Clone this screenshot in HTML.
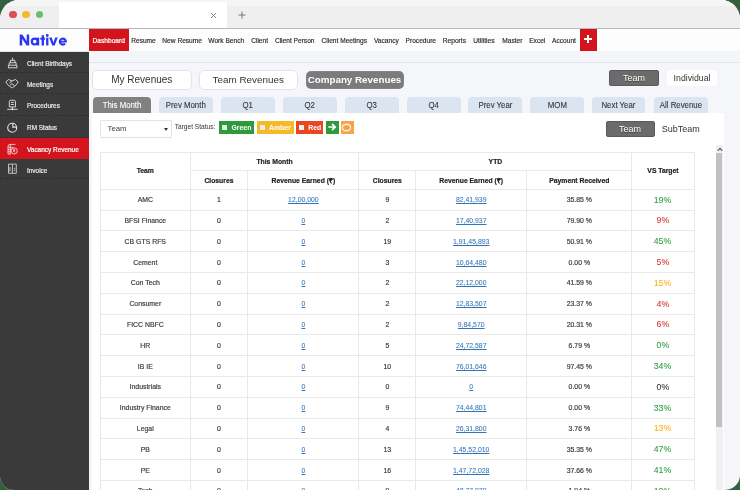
<!DOCTYPE html>
<html><head><meta charset="utf-8"><title>Native</title>
<style>
*{box-sizing:border-box;margin:0;padding:0}
html,body{width:740px;height:490px;overflow:hidden;background:#35603d;font-family:"Liberation Sans",sans-serif;}
#win{position:absolute;left:0;top:0;width:740px;height:490px;border-radius:19px 19px 15px 14px;overflow:hidden;background:#f5f6f9;will-change:transform;}
.abs{position:absolute}
#titlebar{position:absolute;left:0;top:0;width:740px;height:28px;background:#efefef;}
#titlebar .hi{position:absolute;left:0;top:0;width:740px;height:5.700px;background:#f5f5f5}
.dot{position:absolute;top:10.800px;width:7.600px;height:7.600px;border-radius:50%}
#tab{position:absolute;left:59px;top:1.800px;width:168px;height:26.200px;background:#fff}
#tbline{position:absolute;left:0;top:27.700px;width:740px;height:1.800px;background:#b6b9c1}
#hdr{position:absolute;left:0;top:29px;width:740px;height:22.500px;background:#fdfdfe;border-bottom:1px solid #e4e7f0}
#logo{position:absolute;left:19.600px;top:29px;height:22px;line-height:22px;font-weight:bold;font-size:15px;color:#2a38f4;letter-spacing:0.45px}
.nav{position:absolute;top:29px;height:22px;line-height:23px;font-size:6.6px;color:#2c2c2c;-webkit-text-stroke:0.150px currentColor;white-space:nowrap;text-align:center}
#dash{position:absolute;left:89px;top:29px;width:39.500px;height:22.500px;background:#d4141c;color:#fff;font-size:6.6px;line-height:23px;text-align:center;-webkit-text-stroke:0.200px currentColor}
#plus{position:absolute;left:579.600px;top:29px;width:17.500px;height:22px;background:#d4141c}
#plus:before{content:"";position:absolute;left:4.500px;top:9.200px;width:8.200px;height:2px;background:#fff}
#plus:after{content:"";position:absolute;left:7.600px;top:6.100px;width:2px;height:8.200px;background:#fff}
#sub{position:absolute;left:89px;top:51px;width:651px;height:11.700px;background:#f4f5f9;border-bottom:1px solid #e3e5ec}
#side{position:absolute;left:0;top:51.800px;width:88.900px;height:440px;background:#3a3a3a}
.si{position:absolute;left:0;width:88.900px;border-bottom:1px dashed #2e2e2e;color:#e8e8e8;-webkit-text-stroke:0.200px currentColor;font-size:6.450px;padding-left:27px;white-space:nowrap}
.si svg{position:absolute;left:5px;top:5px}
.si.on{background:#d4141c;color:#fff;border-bottom-color:#d4141c}
.btn{position:absolute;text-align:center;white-space:nowrap;border-radius:4px}
.tab{position:absolute;top:97px;height:16px;background:#dbe5f1;border-radius:4px 4px 0 0;font-size:8.500px;line-height:17.400px;color:#333;text-align:center;white-space:nowrap}.cx{display:inline-block;transform:scaleX(0.92)}.tab span{display:inline-block;transform:scaleX(0.92);-webkit-text-stroke:0.100px currentColor}
#panel{position:absolute;left:92px;top:113px;width:632px;height:380px;background:#fff}
table{position:absolute;left:100px;top:152px;border-collapse:collapse;table-layout:fixed;width:593.600px;font-size:6.900px;color:#3c3c3c;-webkit-text-stroke:0.180px currentColor}
td,th{border:1px solid #e8eaea;text-align:center;vertical-align:middle;padding:0;height:20.800px}
th{font-weight:bold;color:#222;height:18.400px;font-size:6.800px}
td a{-webkit-text-stroke:0.050px currentColor;color:#3375ba;text-decoration:underline;text-decoration-thickness:0.700px;text-underline-offset:0.500px}
td.v{font-size:9.500px;-webkit-text-stroke:0.080px currentColor}td.v span{position:relative;top:-0.500px}
.g{color:#2f9e3f}.r{color:#d7353a}.a{color:#f7b21e}.k{color:#333}
</style></head><body><div id="win">
<div id="titlebar"><div class="hi"></div>
<div class="dot" style="left:9.200px;background:#dc4f55"></div><div class="dot" style="left:22.200px;background:#f6b92c"></div><div class="dot" style="left:35.600px;background:#6bbf6b"></div>
<div id="tab"></div>
<svg class="abs" style="left:209.700px;top:11.600px" width="7" height="7" viewBox="0 0 7 7"><path d="M1 1l5 5M6 1l-5 5" stroke="#888" stroke-width="1"/></svg>
<svg class="abs" style="left:237.600px;top:10.600px" width="8" height="8" viewBox="0 0 8 8"><path d="M4 0.500v7M0.500 4h7" stroke="#777" stroke-width="1"/></svg>
</div>
<div id="tbline"></div>
<div id="hdr"></div>
<svg class="abs" style="left:0;top:29px" width="89" height="22" viewBox="0 29 89 22"><g fill="#2a38f4" stroke="none">
<path d="M19.700 45.500V34.500H22.300L26.700 41.200V34.500H29.200V45.500H26.600L22.200 38.800V45.500Z"/>
<rect x="36.900" y="37.600" width="2.300" height="7.900"/>
<rect x="41.600" y="35.300" width="2.400" height="10.200"/><rect x="40.300" y="37.700" width="4.700" height="2"/>
<rect x="46.100" y="37.600" width="2.300" height="7.900"/><circle cx="47.250" cy="35.500" r="1.400"/>
<path d="M49.100 37.600H51.700L53.450 42.700L55.200 37.600H57.800L54.650 45.500H52.250Z"/>
</g><g fill="none" stroke="#2a38f4">
<circle cx="34.700" cy="41.600" r="2.900" stroke-width="2.200"/>
<path d="M65.050 43.500A2.950 2.950 0 1 1 65.750 41.600" stroke-width="2.200"/>
<path d="M60.500 41.700H66.850" stroke-width="1.700"/>
</g></svg>
<div id="dash">Dashboard</div>

<div class="nav" style="left:126.7px;width:33.6px"><span>Resume</span></div>
<div class="nav" style="left:158.0px;width:48.3px"><span>New Resume</span></div>
<div class="nav" style="left:203.7px;width:45.1px"><span>Work Bench</span></div>
<div class="nav" style="left:246.2px;width:26.8px"><span>Client</span></div>
<div class="nav" style="left:270.4px;width:48.6px"><span>Client Person</span></div>
<div class="nav" style="left:316.5px;width:55.5px"><span>Client Meetings</span></div>
<div class="nav" style="left:369.0px;width:34.7px"><span>Vacancy</span></div>
<div class="nav" style="left:401.0px;width:39.6px"><span>Procedure</span></div>
<div class="nav" style="left:438.0px;width:32.8px"><span>Reports</span></div>
<div class="nav" style="left:467.8px;width:32.2px"><span>Utilities</span></div>
<div class="nav" style="left:497.3px;width:30.1px"><span>Master</span></div>
<div class="nav" style="left:525.0px;width:24.5px"><span>Excel</span></div>
<div class="nav" style="left:547.2px;width:33.6px"><span>Account</span></div>
<div id="plus"></div><div id="sub"></div>
<div id="side">
<div class="si" style="top:0.0px;height:21.6px;line-height:24.0px"><svg style="top:5.1px" viewBox="0 0 14 12" width="14" height="12" fill="none" stroke="#e4e4e4" stroke-width="0.9"><path d="M7.650 0.600V3.200M5.400 5.700V3.300h4.500v2.400M4.200 8.200V5.700h6.900v2.500M3.400 10.700V8.200h8.500v2.500M3 10.800h9.300"/></svg>Client Birthdays</div>
<div class="si" style="top:21.6px;height:21.1px;line-height:23.5px"><svg style="top:4.9px" viewBox="0 0 14 12" width="14" height="12" fill="none" stroke="#e4e4e4" stroke-width="0.9" stroke-linejoin="round"><path d="M0.800 3.800L3.600 1.500L7 3L10.400 1.500L13.200 3.800L11.300 6.800L7.600 9.700L6.200 9.500L2.600 6.600ZM4.300 5L7 3M5 7.300L7 5.600L9.600 7.800"/></svg>Meetings</div>
<div class="si" style="top:42.7px;height:21.2px;line-height:23.6px"><svg style="top:4.9px" viewBox="0 0 14 12" width="14" height="12" fill="none" stroke="#e4e4e4" stroke-width="0.9"><path d="M4.300 7.900V2.500Q4.300 1.300 5.500 1.300H9.300Q10.500 1.300 10.500 2.500V7.900ZM5.900 3.500h3M5.900 5.500h3M2.200 10.300H12.600M7.400 7.900V10.300"/><circle cx="7.400" cy="10.300" r="0.900" fill="#e4e4e4" stroke="none"/></svg>Procedures</div>
<div class="si" style="top:63.9px;height:22.3px;line-height:24.7px"><svg style="top:5.5px" viewBox="0 0 14 12" width="14" height="12" fill="none" stroke="#e4e4e4" stroke-width="1.100"><circle cx="7.200" cy="6.700" r="4.500"/><path d="M7.800 2.200V6.100H11.700"/></svg>RM Status</div>
<div class="si on" style="top:86.2px;height:20.8px;line-height:23.2px"><svg style="top:4.7px" viewBox="0 0 14 12" width="14" height="12" fill="none" stroke="#f7cfcf" stroke-width="0.900"><path d="M3 11V3.300Q3 1.400 5 1.400H10.500M3 4.300h5M3 6.500h3M3 8.700h2.500M5.300 1.400V11M3 11H6"/><circle cx="9.200" cy="7.900" r="3.100"/><path d="M8.200 6.800h2M8.200 7.900h2M8.400 6.800q1.800 0.300 0 1.100l1.300 1.500"/></svg>Vacancy Revenue</div>
<div class="si" style="top:107.0px;height:20.6px;line-height:23.0px"><svg style="top:4.6px" viewBox="0 0 14 12" width="14" height="12" fill="none" stroke="#d0d0d0" stroke-width="0.900"><path d="M3.500 1.100H11.300V10.300H3.500ZM7.400 1.100V10.300M8.800 5.300h1.500M8.800 7.300h1.500M5 8.500V4"/></svg>Invoice</div>
</div>
<div class="btn" style="left:92px;top:70px;width:99.500px;height:20px;background:#fff;border:1px solid #e4e4e6;font-size:10px;line-height:18px;color:#333;border-radius:5px">My Revenues</div>
<div class="btn" style="left:198.500px;top:70px;width:99.500px;height:20px;background:#fff;border:1px solid #e4e4e6;font-size:9.900px;line-height:18px;color:#333;border-radius:5px">Team Revenues</div>
<div class="btn" style="left:305.500px;top:70.500px;width:98px;height:18.500px;background:#7b7b7b;border:1px dotted #8d8d8d;font-size:9.800px;line-height:16.500px;color:#fff;font-weight:bold;border-radius:5px">Company Revenues</div>
<div class="btn" style="left:608.500px;top:70px;width:50px;height:16px;background:#6b6b6b;border:1px solid #5a5a5a;font-size:9.800px;line-height:14.200px;color:#fff;border-radius:2px"><span class="cx" style="text-shadow:0 0.500px 0.500px rgba(0,0,0,.45)">Team</span></div>
<div class="btn" style="left:667px;top:70px;width:49.500px;height:16px;background:#fff;font-size:9.500px;line-height:15.800px;color:#333;border-radius:2px"><span class="cx">Individual</span></div>
<div class="tab" style="left:92.500px;width:58.500px;background:#818181;color:#fff;"><span>This Month</span></div>
<div class="tab" style="left:158.8px;width:54.6px"><span>Prev Month</span></div>
<div class="tab" style="left:221.0px;width:54.0px"><span>Q1</span></div>
<div class="tab" style="left:282.7px;width:54.1px"><span>Q2</span></div>
<div class="tab" style="left:344.9px;width:54.1px"><span>Q3</span></div>
<div class="tab" style="left:406.5px;width:54.0px"><span>Q4</span></div>
<div class="tab" style="left:468.3px;width:54.1px"><span>Prev Year</span></div>
<div class="tab" style="left:530.4px;width:53.6px"><span>MOM</span></div>
<div class="tab" style="left:592.0px;width:53.4px"><span>Next Year</span></div>
<div class="tab" style="left:654.0px;width:53.8px"><span>All Revenue</span></div>
<div id="panel"></div>
<div class="abs" style="left:100px;top:120.300px;width:71.600px;height:18px;border:1px solid #e3e3e3;border-radius:1px;background:#fff;font-size:7.800px;line-height:15.800px;color:#444;padding-left:6.500px">Team<span class="abs" style="right:2.200px;top:6.800px;width:0;height:0;border-left:2.100px solid transparent;border-right:2.100px solid transparent;border-top:3px solid #333"></span></div>
<div class="abs" style="left:174.700px;top:122.300px;font-size:6.600px;line-height:10px;color:#333;white-space:nowrap">Target Status:</div>
<div class="abs" style="left:218.500px;top:120.900px;width:35.500px;height:12.900px;background:#2d9a3c;color:#fff;font-weight:bold;font-size:6.900px;line-height:13.100px;padding-left:13px"><span class="abs" style="left:3.700px;top:4.100px;width:5px;height:5px;background:#e6efe6"></span>Green</div>
<div class="abs" style="left:256.500px;top:120.900px;width:37.500px;height:12.900px;background:#f6b928;color:#fff;font-weight:bold;font-size:6.900px;line-height:13.100px;padding-left:12.500px"><span class="abs" style="left:3.700px;top:4.100px;width:5px;height:5px;background:#eee"></span>Amber</div>
<div class="abs" style="left:295.700px;top:120.900px;width:27.800px;height:12.900px;background:#e8481f;color:#fff;font-weight:bold;font-size:6.900px;line-height:13.100px;padding-left:12.500px"><span class="abs" style="left:3.700px;top:4.100px;width:5px;height:5px;background:#eee"></span>Red</div>
<div class="abs" style="left:325.800px;top:120.900px;width:12.900px;height:12.900px;background:#2d9a3c"><svg class="abs" style="left:2.200px;top:2.500px" width="9" height="8" viewBox="0 0 9 8"><path d="M0.300 4h6.500M4 0.800l3.200 3.200-3.200 3.200" fill="none" stroke="#fff" stroke-width="1.700"/></svg></div>
<div class="abs" style="left:340.600px;top:120.900px;width:13.300px;height:12.900px;background:#f5a44a"><svg class="abs" style="left:1.900px;top:2.100px" width="9" height="9" viewBox="0 0 9 9"><ellipse cx="4.500" cy="4.500" rx="4.200" ry="3.300" fill="none" stroke="#fff3e0" stroke-width="1.400"/></svg></div>
<div class="btn" style="left:605.500px;top:121px;width:49px;height:16.200px;background:#6b6b6b;border:1px solid #5a5a5a;font-size:9.800px;line-height:14.200px;color:#fff;border-radius:2px"><span class="cx" style="text-shadow:0 0.500px 0.500px rgba(0,0,0,.45)">Team</span></div>
<div class="abs" style="left:660px;top:121px;font-size:9.800px;line-height:16px;color:#333"><span class="cx">SubTeam</span></div>
<table><colgroup><col style="width:89.600px"><col style="width:57.700px"><col style="width:111.200px"><col style="width:56.700px"><col style="width:111.100px"><col style="width:105.100px"><col style="width:62.200px"></colgroup>
<tr><th rowspan="2">Team</th><th colspan="2">This Month</th><th colspan="3">YTD</th><th rowspan="2">VS Target</th></tr>
<tr><th>Closures</th><th>Revenue Earned (₹)</th><th>Closures</th><th>Revenue Earned (₹)</th><th>Payment Received</th></tr>
<tr><td>AMC</td><td>1</td><td><a>12,00,000</a></td><td>9</td><td><a>82,41,939</a></td><td>35.85 %</td><td class="v g"><span class="cx">19%</span></td></tr>
<tr><td>BFSI Finance</td><td>0</td><td><a>0</a></td><td>2</td><td><a>17,40,937</a></td><td>79.90 %</td><td class="v r"><span class="cx">9%</span></td></tr>
<tr><td>CB GTS RFS</td><td>0</td><td><a>0</a></td><td>19</td><td><a>1,91,45,893</a></td><td>50.91 %</td><td class="v g"><span class="cx">45%</span></td></tr>
<tr><td>Cement</td><td>0</td><td><a>0</a></td><td>3</td><td><a>10,64,480</a></td><td>0.00 %</td><td class="v r"><span class="cx">5%</span></td></tr>
<tr><td>Con Tech</td><td>0</td><td><a>0</a></td><td>2</td><td><a>22,12,000</a></td><td>41.59 %</td><td class="v a"><span class="cx">15%</span></td></tr>
<tr><td>Consumer</td><td>0</td><td><a>0</a></td><td>2</td><td><a>12,83,507</a></td><td>23.37 %</td><td class="v r"><span class="cx">4%</span></td></tr>
<tr><td>FICC NBFC</td><td>0</td><td><a>0</a></td><td>2</td><td><a>9,84,570</a></td><td>20.31 %</td><td class="v r"><span class="cx">6%</span></td></tr>
<tr><td>HR</td><td>0</td><td><a>0</a></td><td>5</td><td><a>24,72,587</a></td><td>6.79 %</td><td class="v g"><span class="cx">0%</span></td></tr>
<tr><td>IB IE</td><td>0</td><td><a>0</a></td><td>10</td><td><a>76,01,646</a></td><td>97.45 %</td><td class="v g"><span class="cx">34%</span></td></tr>
<tr><td>Industrials</td><td>0</td><td><a>0</a></td><td>0</td><td><a>0</a></td><td>0.00 %</td><td class="v k"><span class="cx">0%</span></td></tr>
<tr><td>Industry Finance</td><td>0</td><td><a>0</a></td><td>9</td><td><a>74,44,801</a></td><td>0.00 %</td><td class="v g"><span class="cx">33%</span></td></tr>
<tr><td>Legal</td><td>0</td><td><a>0</a></td><td>4</td><td><a>26,31,800</a></td><td>3.76 %</td><td class="v a"><span class="cx">13%</span></td></tr>
<tr><td>PB</td><td>0</td><td><a>0</a></td><td>13</td><td><a>1,45,52,010</a></td><td>35.35 %</td><td class="v g"><span class="cx">47%</span></td></tr>
<tr><td>PE</td><td>0</td><td><a>0</a></td><td>16</td><td><a>1,47,72,028</a></td><td>37.66 %</td><td class="v g"><span class="cx">41%</span></td></tr>
<tr><td>Tech</td><td>0</td><td><a>0</a></td><td>9</td><td><a>48,77,979</a></td><td>1.94 %</td><td class="v g"><span class="cx">10%</span></td></tr>
</table>
<div class="abs" style="left:715.700px;top:145px;width:7.800px;height:350px;background:#f0f0f0"></div>
<div class="abs" style="left:716.100px;top:153px;width:6.300px;height:273.700px;background:#c1c1c1"></div>
<svg class="abs" style="left:716.500px;top:146.500px" width="6" height="5" viewBox="0 0 6 5"><path d="M0.800 3.800L3 1.400L5.200 3.800" fill="none" stroke="#555" stroke-width="1.100"/></svg>
</div></body></html>
